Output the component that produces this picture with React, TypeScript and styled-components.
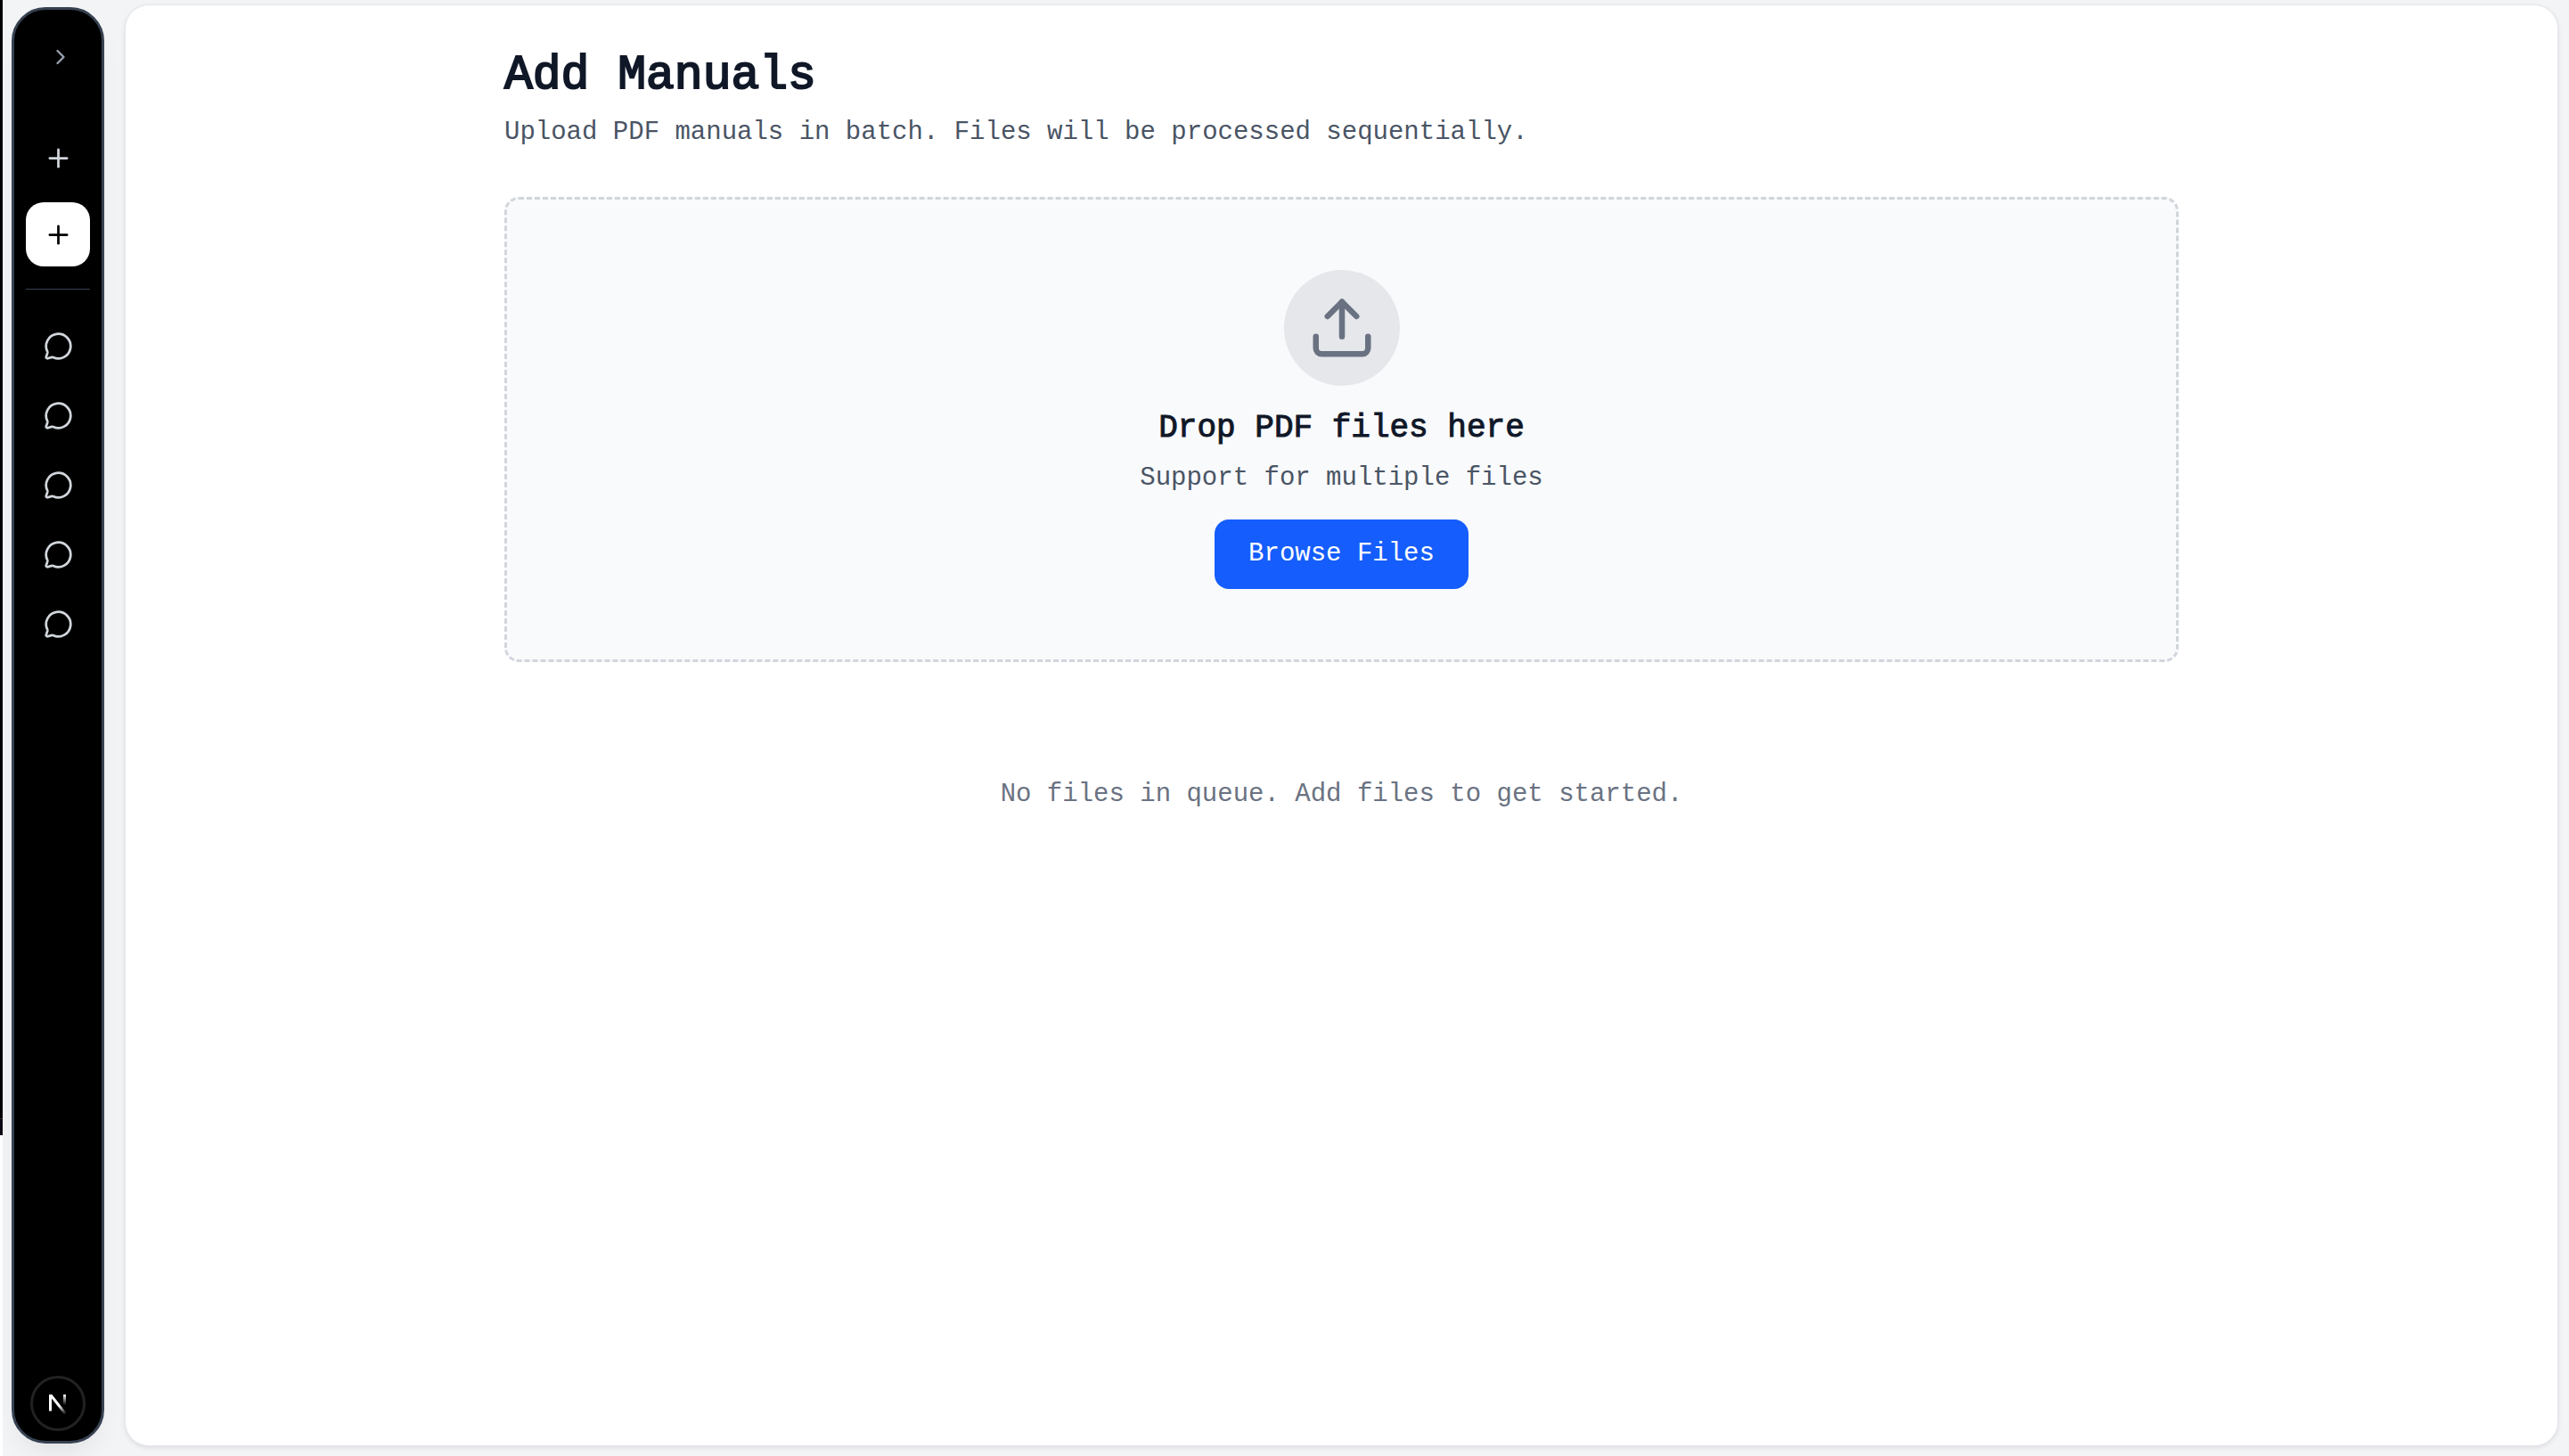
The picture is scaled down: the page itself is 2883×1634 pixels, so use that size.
import React, { useRef } from "react";
import styled, { createGlobalStyle } from "styled-components";
import { ChevronRight, MessageCircle, Plus, Upload } from "lucide-react";

const GlobalStyle = createGlobalStyle`
  *, *::before, *::after { box-sizing: border-box; }
  html, body, #root { height: 100%; }
  body {
    margin: 0;
    background: #f3f4f6;
    color: #101828;
    font-family: "Liberation Mono", monospace;
    font-size: 29px;
    line-height: 44px;
  }
  h1, h2, p { margin: 0; }
  button { font: inherit; border: 0; cursor: pointer; }
`;

const Shell = styled.div`
  display: flex;
  height: 100vh;
`;

const WindowEdge = styled.div`
  flex: none;
  width: 3px;
  background: linear-gradient(#000 0 1255px, #33303a 1255px 1256px, #0d0815 1256px 1274px, #fff 1274px);
`;

const Sidebar = styled.nav`
  flex: none;
  display: flex;
  flex-direction: column;
  align-items: center;
  width: 104px;
  margin: 8px 24px 14px 10px;
  padding: 30px 13px 11px;
  background: #000;
  border: 3px solid #374151;
  border-radius: 38px;
  box-shadow: 0 16px 32px -12px rgba(0, 0, 0, 0.1);
`;

const IconButton = styled.button<{ $active?: boolean; $height?: number }>`
  display: flex;
  align-items: center;
  justify-content: center;
  flex: none;
  width: 72px;
  height: ${(p) => p.$height ?? 72}px;
  padding: 0;
  border-radius: 20px;
  background: ${(p) => (p.$active ? "#fff" : "transparent")};
  color: ${(p) => (p.$active ? "#000" : "#d1d5dc")};
`;

const ExpandButton = styled(IconButton)`
  justify-content: flex-end;
  padding-right: 19px;
  color: #99a1af;
`;

const NewActions = styled.div`
  display: flex;
  flex-direction: column;
  gap: 14px;
  margin-top: 54px;
  padding-bottom: 25px;
  border-bottom: 1px solid #364153;
`;

const ChatList = styled.div`
  display: flex;
  flex-direction: column;
  gap: 6px;
  margin-top: 27px;
`;

const DevBadge = styled.button`
  display: grid;
  place-items: center;
  width: 62px;
  height: 62px;
  margin-top: auto;
  padding: 0;
  border: 3px solid #222;
  border-radius: 50%;
  background: #000;
`;

const Main = styled.main`
  flex: 1;
  min-width: 0;
  margin: 6px 13px 12px 0;
  padding: 47px 56px;
  background: #fff;
  border-radius: 26px;
  box-shadow: 0 0 0 1px #e5e7eb, 0 2px 6px rgba(0, 0, 0, 0.12);
`;

const Content = styled.div`
  max-width: 1879px;
  margin: 0 auto;
`;

const Title = styled.h1`
  font-size: 53px;
  line-height: 64px;
  font-weight: 400;
  -webkit-text-stroke: 2px currentColor;
`;

const Subtitle = styled.p`
  margin-top: 10px;
  color: #4a5565;
`;

const DropZone = styled.section`
  display: flex;
  flex-direction: column;
  align-items: center;
  margin-top: 50px;
  padding: 79px 56px;
  background: #f9fafc;
  border: 3px dashed #d1d5dc;
  border-radius: 16px;
`;

const UploadCircle = styled.div`
  display: grid;
  place-items: center;
  width: 130px;
  height: 130px;
  border-radius: 50%;
  background: #e5e7eb;
  color: #6a7282;
`;

const DropTitle = styled.h2`
  margin-top: 26px;
  font-size: 36px;
  line-height: 44px;
  font-weight: 400;
  -webkit-text-stroke: 1px currentColor;
`;

const DropHint = styled.p`
  margin-top: 12px;
  color: #4a5565;
`;

const BrowseButton = styled.button`
  width: 285px;
  height: 78px;
  margin-top: 24px;
  padding: 0;
  border-radius: 16px;
  background: #155dfc;
  color: #fff;
`;

const EmptyQueue = styled.p`
  margin-top: 127px;
  text-align: center;
  color: #6a7282;
`;

const chats = ["Chat 1", "Chat 2", "Chat 3", "Chat 4", "Chat 5"];

function NextLogo() {
  return (
    <svg width="24" height="26" viewBox="0 0 24 26" fill="none" aria-hidden="true">
      <defs>
        <linearGradient id="diagonal" x1="14" y1="15" x2="21" y2="25" gradientUnits="userSpaceOnUse">
          <stop stopColor="#fff" />
          <stop offset="1" stopColor="#fff" stopOpacity="0" />
        </linearGradient>
        <linearGradient id="stem" x1="19" y1="3" x2="19" y2="15" gradientUnits="userSpaceOnUse">
          <stop stopColor="#fff" />
          <stop offset="1" stopColor="#fff" stopOpacity="0" />
        </linearGradient>
      </defs>
      <path d="M2 3H5.4L22 24.2L19.6 26L5 7.5V21.5H2Z" fill="url(#diagonal)" />
      <path d="M18 3h3v13h-3z" fill="url(#stem)" />
    </svg>
  );
}

export default function App() {
  const picker = useRef<HTMLInputElement>(null);
  return (
    <>
      <GlobalStyle />
      <Shell>
        <WindowEdge />
        <Sidebar aria-label="Main">
          <ExpandButton $height={46} aria-label="Expand sidebar">
            <ChevronRight size={28} />
          </ExpandButton>
          <NewActions>
            <IconButton aria-label="New chat">
              <Plus size={33} />
            </IconButton>
            <IconButton $active aria-label="Add manuals">
              <Plus size={33} />
            </IconButton>
          </NewActions>
          <ChatList>
            {chats.map((name) => (
              <IconButton key={name} aria-label={name}>
                <MessageCircle size={33} />
              </IconButton>
            ))}
          </ChatList>
          <DevBadge aria-label="Developer tools">
            <NextLogo />
          </DevBadge>
        </Sidebar>
        <Main>
          <Content>
            <Title>Add Manuals</Title>
            <Subtitle>Upload PDF manuals in batch. Files will be processed sequentially.</Subtitle>
            <DropZone>
              <UploadCircle>
                <Upload size={78} />
              </UploadCircle>
              <DropTitle>Drop PDF files here</DropTitle>
              <DropHint>Support for multiple files</DropHint>
              <BrowseButton onClick={() => picker.current?.click()}>Browse Files</BrowseButton>
              <input ref={picker} type="file" accept="application/pdf" multiple hidden aria-label="PDF files" />
            </DropZone>
            <EmptyQueue>No files in queue. Add files to get started.</EmptyQueue>
          </Content>
        </Main>
      </Shell>
    </>
  );
}
